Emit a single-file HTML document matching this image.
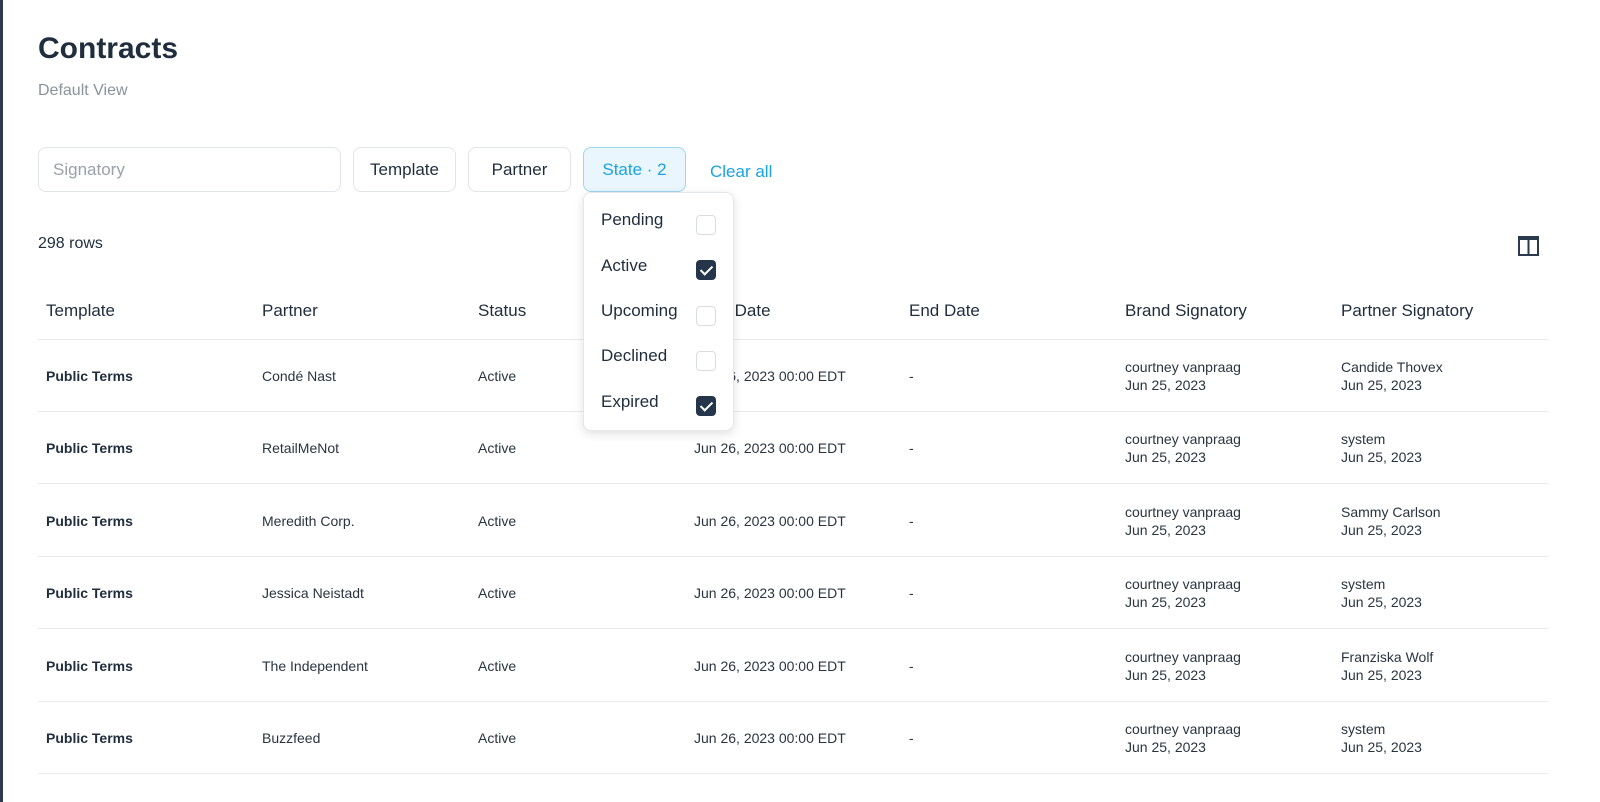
<!DOCTYPE html>
<html><head><meta charset="utf-8"><style>
*{margin:0;padding:0;box-sizing:border-box}
body{width:1600px;height:802px;background:#fff;font-family:"Liberation Sans",sans-serif;color:#1f2d3d;position:relative;overflow:hidden}
.a{position:absolute;white-space:nowrap}
.btn{position:absolute;top:147px;height:45px;border:1px solid #e2e5e8;border-radius:8px;font-size:17px;line-height:43px;text-align:center;color:#1f2d3d}
.h{font-size:17px;top:301px;color:#1f2d3d}
.line{position:absolute;left:38px;width:1510px;height:1px;background:#e8eaec}
.c{font-size:14px;color:#2a3440}
.cb{position:absolute;left:696px;width:20px;height:20px;border:1px solid #d9dde1;border-radius:4px}
.ck{background:#25354a;border-color:#25354a}
.ck::after{content:"";position:absolute;left:6px;top:2px;width:5px;height:10px;border:solid #fff;border-width:0 2px 2px 0;transform:rotate(45deg)}
.m{font-size:17px;left:601px;color:#1f2d3d}
</style></head><body>
<div class="a" style="left:0;top:0;width:3px;height:802px;background:#2c3a4e"></div>
<div class="a" style="left:38px;top:32px;font-size:30px;font-weight:bold;color:#1f2d3d">Contracts</div>
<div class="a" style="left:38px;top:82px;font-size:16px;color:#8a929b">Default View</div>
<div class="btn" style="left:38px;width:303px;text-align:left;padding-left:14px;color:#9aa1a8">Signatory</div>
<div class="btn" style="left:353px;width:103px">Template</div>
<div class="btn" style="left:468px;width:103px">Partner</div>
<div class="btn" style="left:583px;width:103px;background:#eaf6fd;border-color:#9fd6f2;color:#1aa3e0">State · 2</div>
<div class="a" style="left:710px;top:162px;font-size:17px;color:#1aa3e0">Clear all</div>
<div class="a" style="left:38px;top:235px;font-size:16px">298 rows</div>
<svg class="a" style="left:1518px;top:236px" width="21" height="20" viewBox="0 0 21 20"><rect x="1" y="1" width="19" height="18" fill="none" stroke="#2c3a4e" stroke-width="2"/><line x1="10.5" y1="1" x2="10.5" y2="19" stroke="#2c3a4e" stroke-width="2"/><line x1="1" y1="3" x2="20" y2="3" stroke="#2c3a4e" stroke-width="2"/></svg>
<div class="a h" style="left:46px">Template</div>
<div class="a h" style="left:262px">Partner</div>
<div class="a h" style="left:478px">Status</div>
<div class="a h" style="left:694px">Start Date</div>
<div class="a h" style="left:909px">End Date</div>
<div class="a h" style="left:1125px">Brand Signatory</div>
<div class="a h" style="left:1341px">Partner Signatory</div>
<div class="line" style="top:339px"></div>
<div id="rows"></div>
<script>
var d=[["Condé Nast","Candide Thovex"],["RetailMeNot","system"],["Meredith Corp.","Sammy Carlson"],["Jessica Neistadt","system"],["The Independent","Franziska Wolf"],["Buzzfeed","system"]];
var h="";d.forEach(function(r,i){var t=339+i*72.4;var y=t+29;
h+='<div class="a c" style="left:46px;top:'+y+'px;font-weight:bold;color:#1f2d3d">Public Terms</div>'+
'<div class="a c" style="left:262px;top:'+y+'px">'+r[0]+'</div>'+
'<div class="a c" style="left:478px;top:'+y+'px">Active</div>'+
'<div class="a c" style="left:694px;top:'+y+'px">Jun 26, 2023 00:00 EDT</div>'+
'<div class="a c" style="left:909px;top:'+y+'px">-</div>'+
'<div class="a c" style="left:1125px;top:'+(y-10)+'px;line-height:18px">courtney vanpraag<br>Jun 25, 2023</div>'+
'<div class="a c" style="left:1341px;top:'+(y-10)+'px;line-height:18px">'+r[1]+'<br>Jun 25, 2023</div>'+
'<div class="line" style="top:'+(t+72)+'px"></div>';});
document.getElementById('rows').outerHTML=h;
</script>
<div class="a" style="left:583px;top:192px;width:151px;height:239px;background:#fff;border:1px solid #e4e7ea;border-radius:8px;box-shadow:0 3px 10px rgba(0,0,0,.12)"></div>
<div class="a m" style="top:210px">Pending</div><div class="cb" style="top:215px"></div>
<div class="a m" style="top:256px">Active</div><div class="cb ck" style="top:260px"></div>
<div class="a m" style="top:301px">Upcoming</div><div class="cb" style="top:306px"></div>
<div class="a m" style="top:346px">Declined</div><div class="cb" style="top:351px"></div>
<div class="a m" style="top:392px">Expired</div><div class="cb ck" style="top:396px"></div>
</body></html>
